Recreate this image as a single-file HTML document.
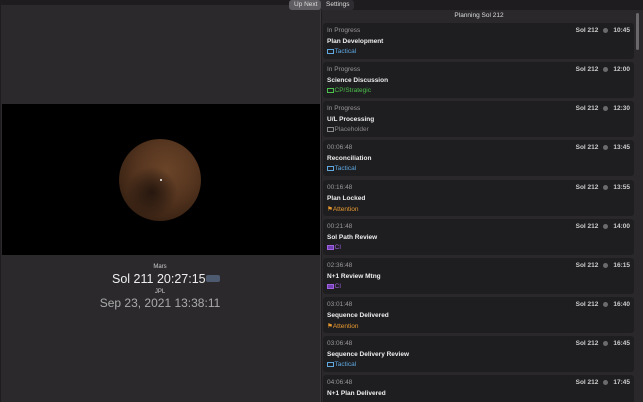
<!DOCTYPE html>
<html><head><meta charset="utf-8"><style>
*{margin:0;padding:0;box-sizing:border-box}
html,body{width:643px;height:402px;overflow:hidden}
body{background:#1e1c1f;font-family:"Liberation Sans",Arial,sans-serif;position:relative;color:#ddd}
.left{position:absolute;left:1px;top:5px;width:320px;height:397px;background:#2b292c;border-right:1px solid #3a383b}
.black{position:absolute;left:2px;top:104px;width:318px;height:151px;background:#000}
.mars{position:absolute;left:119px;top:139px;width:82px;height:82px;border-radius:50%;background:radial-gradient(circle at 40% 65%,rgba(20,12,8,.75) 0%,rgba(20,12,8,.4) 18%,rgba(0,0,0,0) 35%),radial-gradient(circle at 58% 38%,#6a4428 0%,#573620 40%,#3d2515 70%,#1c110a 100%)}
.dot{position:absolute;left:160px;top:179px;width:2px;height:2px;background:#fff;border-radius:50%}
.tabs{position:absolute;left:289px;top:0;height:10px;width:65px;background:#2e2c30;border-radius:3px;font-size:6.5px;color:#ddd}
.tabs span{position:absolute;top:1px;line-height:8px}
.sel{position:absolute;left:0;top:0;width:32px;height:10px;background:#5f5d61;border-radius:3px}
.right{position:absolute;left:322px;top:10px;width:321px;height:392px;background:#2a282b}
.hdr{position:absolute;left:322px;top:12px;width:314px;text-align:center;font-size:6.5px;color:#ddd}
.card{position:absolute;left:323px;width:311px;height:36px;background:#1e1d20;border-radius:3px}
.card .a{position:absolute;left:4px;top:4px;font-size:6.5px;color:#9a989b}
.card .b{position:absolute;left:4px;top:15px;font-size:6.5px;color:#eee;font-weight:bold}
.card .c{position:absolute;left:4px;top:25px;font-size:6.5px}
.card .r{position:absolute;right:4px;top:4px;font-size:6.5px;color:#ccc;font-weight:bold}
.card .r i{display:inline-block;width:5px;height:5px;border-radius:50%;background:#6b6a6d;margin:0 5px;vertical-align:-0.5px}
.ic{display:inline-block;width:7px;height:5px;border:1px solid currentColor;border-top-width:1.5px;vertical-align:-0.5px;margin-right:0.5px}
.sb{position:absolute;left:636px;top:13px;width:3px;height:37px;background:#6a686b;border-radius:2px}
</style></head><body>
<div class="left"></div>
<div class="black"></div>
<div class="mars"></div><div class="dot"></div>
<div style="position:absolute;left:0;width:320px;top:264px;text-align:center;font-size:6px;color:#ccc">Mars</div>
<div style="position:absolute;left:112px;top:272px;font-size:12.5px;color:#eee">Sol 211 20:27:15<span style="display:inline-block;width:14px;height:7px;background:#4d5a70;border-radius:2px;vertical-align:1px"></span></div>
<div style="position:absolute;left:0;width:320px;top:289px;text-align:center;font-size:6px;color:#ccc">JPL</div>
<div style="position:absolute;left:0;width:320px;top:296px;text-align:center;font-size:12px;color:#aaa">Sep 23, 2021 13:38:11</div>
<div class="right"></div>
<div class="tabs"><div class="sel"></div><span style="left:5px">Up Next</span><span style="left:37px">Settings</span></div>
<div class="hdr">Planning Sol 212</div>
<div class="sb"></div>

<div class="card" style="top:23px"><div class="a">In Progress</div><div class="b">Plan Development</div><div class="c" style="color:#5fa8e0"><span class="ic"></span>Tactical</div><div class="r">Sol 212<i></i>10:45</div></div>
<div class="card" style="top:62px"><div class="a">In Progress</div><div class="b">Science Discussion</div><div class="c" style="color:#4cc04c"><span class="ic"></span>CP/Strategic</div><div class="r">Sol 212<i></i>12:00</div></div>
<div class="card" style="top:101px"><div class="a">In Progress</div><div class="b">U/L Processing</div><div class="c" style="color:#8a888b"><span class="ic"></span>Placeholder</div><div class="r">Sol 212<i></i>12:30</div></div>
<div class="card" style="top:140px"><div class="a">00:06:48</div><div class="b">Reconciliation</div><div class="c" style="color:#5fa8e0"><span class="ic"></span>Tactical</div><div class="r">Sol 212<i></i>13:45</div></div>
<div class="card" style="top:180px"><div class="a">00:16:48</div><div class="b">Plan Locked</div><div class="c" style="color:#e89a30">⚑Attention</div><div class="r">Sol 212<i></i>13:55</div></div>
<div class="card" style="top:219px"><div class="a">00:21:48</div><div class="b">Sol Path Review</div><div class="c" style="color:#a060e0"><span class="ic" style="background:#7040b0"></span>CI</div><div class="r">Sol 212<i></i>14:00</div></div>
<div class="card" style="top:258px"><div class="a">02:36:48</div><div class="b">N+1 Review Mtng</div><div class="c" style="color:#a060e0"><span class="ic" style="background:#7040b0"></span>CI</div><div class="r">Sol 212<i></i>16:15</div></div>
<div class="card" style="top:297px"><div class="a">03:01:48</div><div class="b">Sequence Delivered</div><div class="c" style="color:#e89a30">⚑Attention</div><div class="r">Sol 212<i></i>16:40</div></div>
<div class="card" style="top:336px"><div class="a">03:06:48</div><div class="b">Sequence Delivery Review</div><div class="c" style="color:#5fa8e0"><span class="ic"></span>Tactical</div><div class="r">Sol 212<i></i>16:45</div></div>
<div class="card" style="top:375px"><div class="a">04:06:48</div><div class="b">N+1 Plan Delivered</div><div class="r">Sol 212<i></i>17:45</div></div>
</body></html>
